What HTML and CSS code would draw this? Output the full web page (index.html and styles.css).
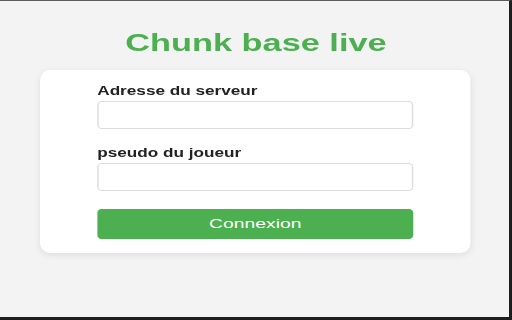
FILE: index.html
```html
<!DOCTYPE html>
<html lang="fr">
<head>
<meta charset="utf-8">
<title>Chunk base live</title>
<link rel="stylesheet" href="styles.css">
</head>
<body>
<div class="frame">
  <div class="app">
    <h1 class="title">Chunk base live</h1>
    <form class="card">
      <label class="label" for="server">Adresse du serveur</label>
      <input class="field" id="server" type="text">
      <label class="label label-second" for="pseudo">pseudo du joueur</label>
      <input class="field" id="pseudo" type="text">
      <button class="btn" type="button">Connexion</button>
    </form>
  </div>
</div>
</body>
</html>
```
FILE: styles.css
```css
html, body {
  margin: 0;
  padding: 0;
  background: #f3f3f3;
}
body {
  width: 512px;
  height: 320px;
  overflow: hidden;
  font-family: "Liberation Sans", Arial, sans-serif;
}
.frame {
  width: 512px;
  height: 320px;
  box-sizing: border-box;
  border-top: 1px solid #5a5a5a;
  border-right: 3px solid #1e1e1e;
  border-bottom: 3px solid #1e1e1e;
  background: #f3f3f3;
  overflow: hidden;
}
.app {
  width: 358px;
  padding-top: 28px;
  transform: scaleX(1.43);
  transform-origin: 0 0;
}
.title {
  margin: 0;
  text-align: center;
  font-size: 24px;
  line-height: 28px;
  font-weight: bold;
  color: #4caf50;
}
.card {
  margin: 13px 29px 0 28px;
  padding: 14px 40px 14px 40px;
  background: #ffffff;
  border-radius: 7px / 10px;
  box-shadow: 0 2px 6px rgba(0, 0, 0, 0.09);
  display: flex;
  flex-direction: column;
}
.label {
  display: block;
  font-size: 12px;
  line-height: 14px;
  font-weight: bold;
  color: #222222;
  margin-bottom: 3px;
}
.label-second {
  margin-top: 17px;
}
.field {
  display: block;
  box-sizing: border-box;
  width: 100%;
  height: 28px;
  margin: 0;
  padding: 0 6px;
  border: 1px solid #dddddd;
  border-radius: 3px / 4px;
  background: #ffffff;
  outline: none;
}
.btn {
  display: block;
  width: 100%;
  height: 30px;
  margin: 18px 0 0;
  padding: 0;
  border: none;
  border-radius: 3px / 4px;
  background: #4caf50;
  color: #ffffff;
  font-family: "Liberation Sans", Arial, sans-serif;
  font-size: 13.5px;
  line-height: 30px;
}
```
